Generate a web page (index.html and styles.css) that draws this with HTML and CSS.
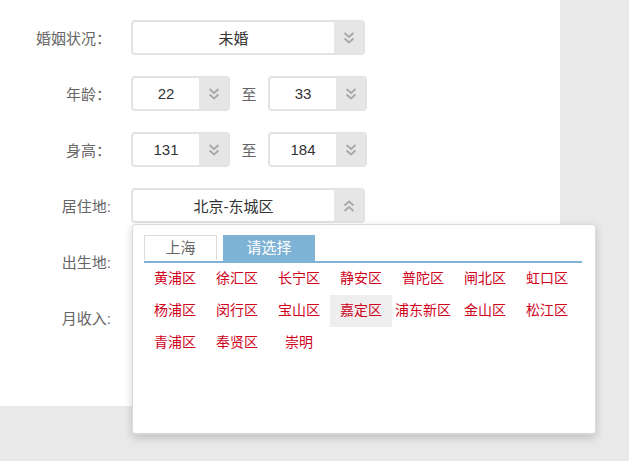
FILE: index.html
```html
<!DOCTYPE html>
<html lang="zh-CN">
<head>
    <meta charset="UTF-8">
    <title>资料筛选</title>
    <link rel="stylesheet" href="styles.css">
</head>
<body>
    <div class="panel">
        <div class="form-row">
            <label class="field-label">婚姻状况：</label>
            <div class="select wide">
                <span class="select-value">未婚</span>
                <span class="select-arrow">
                    <svg width="12" height="14" viewBox="0 0 12 14"><path d="M1.5 2 L6 6 L10.5 2 M1.5 7.5 L6 11.5 L10.5 7.5" fill="none" stroke="#a8a8a8" stroke-width="1.8"/></svg>
                </span>
            </div>
        </div>

        <div class="form-row">
            <label class="field-label">年龄：</label>
            <div class="select small">
                <span class="select-value">22</span>
                <span class="select-arrow">
                    <svg width="12" height="14" viewBox="0 0 12 14"><path d="M1.5 2 L6 6 L10.5 2 M1.5 7.5 L6 11.5 L10.5 7.5" fill="none" stroke="#a8a8a8" stroke-width="1.8"/></svg>
                </span>
            </div>
            <span class="to">至</span>
            <div class="select small">
                <span class="select-value">33</span>
                <span class="select-arrow">
                    <svg width="12" height="14" viewBox="0 0 12 14"><path d="M1.5 2 L6 6 L10.5 2 M1.5 7.5 L6 11.5 L10.5 7.5" fill="none" stroke="#a8a8a8" stroke-width="1.8"/></svg>
                </span>
            </div>
        </div>

        <div class="form-row">
            <label class="field-label">身高：</label>
            <div class="select small">
                <span class="select-value">131</span>
                <span class="select-arrow">
                    <svg width="12" height="14" viewBox="0 0 12 14"><path d="M1.5 2 L6 6 L10.5 2 M1.5 7.5 L6 11.5 L10.5 7.5" fill="none" stroke="#a8a8a8" stroke-width="1.8"/></svg>
                </span>
            </div>
            <span class="to">至</span>
            <div class="select small">
                <span class="select-value">184</span>
                <span class="select-arrow">
                    <svg width="12" height="14" viewBox="0 0 12 14"><path d="M1.5 2 L6 6 L10.5 2 M1.5 7.5 L6 11.5 L10.5 7.5" fill="none" stroke="#a8a8a8" stroke-width="1.8"/></svg>
                </span>
            </div>
        </div>

        <div class="form-row">
            <label class="field-label">居住地:</label>
            <div class="select wide open">
                <span class="select-value">北京-东城区</span>
                <span class="select-arrow">
                    <svg width="12" height="14" viewBox="0 0 12 14"><path d="M1.5 6.5 L6 2.5 L10.5 6.5 M1.5 12 L6 8 L10.5 12" fill="none" stroke="#a8a8a8" stroke-width="1.8"/></svg>
                </span>

                <div class="dropdown">
                    <div class="tabs">
                        <span class="tab">上海</span>
                        <span class="tab active">请选择</span>
                    </div>
                    <ul class="area-list">
                        <li>黄浦区</li>
                        <li>徐汇区</li>
                        <li>长宁区</li>
                        <li>静安区</li>
                        <li>普陀区</li>
                        <li>闸北区</li>
                        <li>虹口区</li>
                        <li>杨浦区</li>
                        <li>闵行区</li>
                        <li>宝山区</li>
                        <li class="hover">嘉定区</li>
                        <li>浦东新区</li>
                        <li>金山区</li>
                        <li>松江区</li>
                        <li>青浦区</li>
                        <li>奉贤区</li>
                        <li>崇明</li>
                    </ul>
                </div>
            </div>
        </div>

        <div class="form-row">
            <label class="field-label">出生地:</label>
        </div>

        <div class="form-row">
            <label class="field-label">月收入:</label>
        </div>
    </div>
</body>
</html>
```

FILE: styles.css
```css
html, body {
    margin: 0;
    min-height: 100vh;
    background: #e9e9e9;
}
body {
    font-family: "Liberation Sans", "Noto Sans CJK SC", sans-serif;
}
.panel {
    width: 560px;
    height: 386px;
    padding-top: 20px;
    background: #fff;
}
.form-row {
    display: flex;
    align-items: center;
    height: 35px;
    margin-bottom: 21px;
}
.field-label {
    width: 111px;
    margin-right: 20px;
    text-align: right;
    font-size: 15px;
    color: #666;
}
.select {
    position: relative;
    display: flex;
    height: 31px;
    border: 2px solid #e3e3e3;
    border-radius: 4px;
    background: #fff;
}
.select.wide {
    width: 230px;
}
.select.small {
    width: 95px;
}
.select-value {
    flex: 1;
    display: flex;
    align-items: center;
    justify-content: center;
    font-size: 15px;
    color: #333;
}
.select-arrow {
    width: 29px;
    display: flex;
    align-items: center;
    justify-content: center;
    background: #e6e6e6;
    border-radius: 0 2px 2px 0;
}
.to {
    width: 38px;
    text-align: center;
    font-size: 15px;
    color: #666;
}
.dropdown {
    position: absolute;
    top: 34px;
    left: -1px;
    width: 438px;
    height: 198px;
    padding: 10px 13px 0 11px;
    background: #fff;
    border: 1px solid #dcdcdc;
    border-bottom: 2px solid #d6d6d6;
    border-radius: 4px;
    box-shadow: 0 3px 8px rgba(0, 0, 0, 0.18);
    z-index: 2;
}
.tabs {
    display: flex;
    gap: 6px;
    border-bottom: 2px solid #7fb3d6;
}
.tab {
    width: 71px;
    height: 24px;
    line-height: 24px;
    text-align: center;
    font-size: 15px;
    color: #666;
    border: 1px solid #dcdcdc;
    border-bottom: none;
}
.tab.active {
    width: 92px;
    height: 26px;
    line-height: 26px;
    border: none;
    background: #7fb3d6;
    color: #fff;
}
.area-list {
    display: flex;
    flex-wrap: wrap;
    margin: 0;
    padding: 0;
    list-style: none;
}
.area-list li {
    width: 62px;
    height: 32px;
    line-height: 30px;
    text-align: center;
    font-size: 14px;
    color: #d0021b;
}
.area-list li.hover {
    background: #eee;
}
```
